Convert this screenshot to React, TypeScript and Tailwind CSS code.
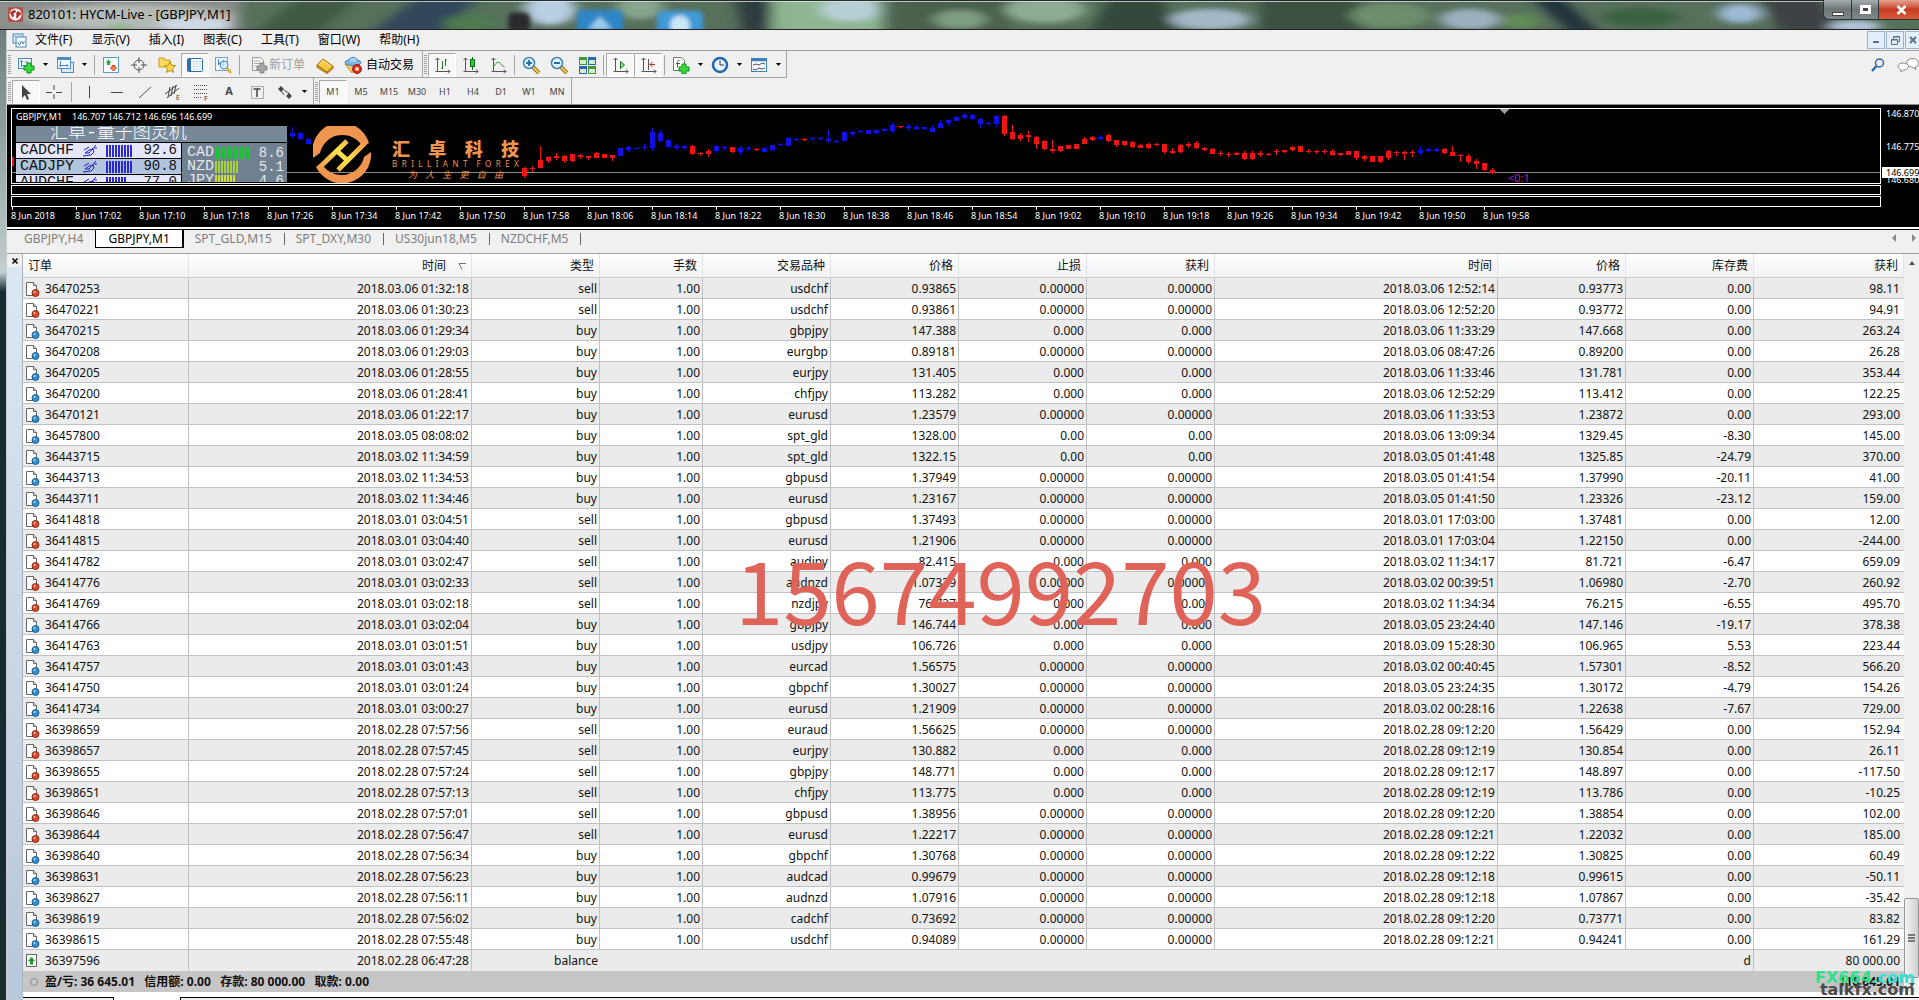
import type { ReactNode } from "react";
import clsx from "clsx";

type Candle = [number, number, number, number, number];

// [up, wick top, body top, body bottom, wick bottom]
const candles: Candle[] = [
    [0, 67, 68, 76, 78], [0, 66, 68, 69, 72], [0, 46, 60, 68, 68], [0, 56, 57, 61, 63], [0, 53, 56, 58, 60], [0, 55, 56, 61, 63],
    [0, 54, 54, 61, 62], [0, 54, 55, 57, 59], [0, 56, 56, 58, 60], [0, 52, 53, 58, 58], [0, 54, 54, 58, 58], [0, 55, 55, 58, 61],
    [1, 48, 48, 56, 56], [1, 46, 47, 50, 52], [1, 48, 48, 49, 49], [1, 44, 47, 48, 50], [1, 28, 32, 48, 51], [1, 30, 33, 41, 42],
    [1, 39, 40, 47, 48], [1, 44, 46, 48, 50], [1, 45, 46, 48, 50], [0, 45, 46, 54, 55], [0, 52, 53, 54, 56], [0, 49, 51, 54, 57],
    [1, 45, 46, 51, 53], [1, 46, 47, 48, 51], [0, 47, 47, 52, 53], [1, 46, 48, 52, 55], [1, 46, 48, 49, 51], [0, 48, 49, 50, 51],
    [1, 47, 48, 52, 52], [1, 45, 45, 50, 51], [1, 43, 44, 45, 46], [1, 37, 38, 46, 46], [1, 38, 39, 40, 41], [0, 38, 39, 40, 41],
    [1, 37, 38, 39, 40], [1, 37, 38, 39, 40], [1, 30, 39, 41, 43], [1, 40, 41, 42, 43], [1, 31, 32, 41, 41], [1, 31, 32, 34, 37],
    [1, 30, 31, 32, 33], [1, 30, 30, 34, 34], [1, 30, 30, 33, 34], [1, 28, 29, 31, 31], [1, 23, 25, 31, 33], [0, 26, 26, 27, 28],
    [1, 24, 26, 28, 30], [1, 25, 27, 29, 30], [1, 27, 27, 29, 30], [1, 25, 28, 32, 32], [1, 20, 23, 28, 28], [1, 19, 20, 23, 26],
    [1, 16, 17, 21, 21], [1, 13, 15, 18, 19], [1, 14, 15, 19, 20], [1, 18, 19, 24, 28], [1, 22, 23, 24, 25], [1, 15, 16, 24, 27],
    [0, 15, 16, 34, 36], [0, 25, 32, 39, 40], [0, 33, 35, 39, 41], [0, 31, 35, 37, 42], [0, 36, 37, 44, 49], [0, 40, 41, 49, 50],
    [0, 40, 49, 51, 53], [0, 46, 46, 51, 52], [0, 45, 45, 49, 49], [0, 44, 44, 49, 49], [0, 37, 39, 44, 44], [0, 36, 37, 40, 41],
    [1, 35, 37, 39, 40], [0, 34, 35, 41, 42], [0, 40, 40, 45, 47], [0, 41, 41, 45, 46], [0, 41, 42, 47, 48], [0, 44, 45, 48, 48],
    [0, 43, 44, 48, 49], [0, 43, 44, 45, 46], [0, 44, 44, 52, 54], [0, 48, 51, 53, 54], [0, 44, 45, 52, 53], [0, 42, 44, 46, 48],
    [0, 41, 43, 48, 49], [0, 47, 48, 50, 51], [0, 48, 49, 54, 54], [0, 51, 53, 54, 56], [0, 52, 54, 55, 57], [0, 52, 53, 55, 55],
    [0, 51, 53, 59, 60], [0, 51, 53, 59, 60], [0, 51, 53, 55, 57], [0, 53, 54, 55, 56], [0, 49, 51, 52, 55], [0, 50, 50, 52, 53],
    [0, 46, 47, 50, 51], [0, 46, 46, 52, 52], [0, 49, 51, 52, 53], [0, 50, 51, 52, 54], [0, 49, 51, 52, 54], [0, 49, 51, 55, 56],
    [0, 53, 53, 55, 56], [0, 51, 51, 55, 55], [0, 51, 51, 58, 60], [0, 55, 56, 59, 61], [0, 56, 56, 62, 62], [0, 56, 56, 62, 63],
    [0, 50, 51, 58, 60], [0, 51, 52, 53, 56], [0, 51, 52, 54, 60], [0, 50, 52, 53, 57], [1, 46, 50, 53, 55], [1, 48, 49, 51, 52],
    [1, 48, 49, 51, 52], [0, 48, 49, 53, 54], [0, 46, 52, 56, 56], [0, 54, 55, 56, 62], [0, 54, 56, 62, 64], [0, 59, 61, 64, 69],
    [0, 63, 63, 70, 71], [0, 68, 70, 73, 74],
];

const times = [
    "8 Jun 2018", "8 Jun 17:02", "8 Jun 17:10", "8 Jun 17:18", "8 Jun 17:26", "8 Jun 17:34", "8 Jun 17:42", "8 Jun 17:50",
    "8 Jun 17:58", "8 Jun 18:06", "8 Jun 18:14", "8 Jun 18:22", "8 Jun 18:30", "8 Jun 18:38", "8 Jun 18:46", "8 Jun 18:54",
    "8 Jun 19:02", "8 Jun 19:10", "8 Jun 19:18", "8 Jun 19:26", "8 Jun 19:34", "8 Jun 19:42", "8 Jun 19:50", "8 Jun 19:58",
];

// order | open time | type | symbol | price | s/l | t/p | close time | price | swap | profit
const orders = `36470253|2018.03.06 01:32:18|sell|usdchf|0.93865|0.00000|0.00000|2018.03.06 12:52:14|0.93773|0.00|98.11
36470221|2018.03.06 01:30:23|sell|usdchf|0.93861|0.00000|0.00000|2018.03.06 12:52:20|0.93772|0.00|94.91
36470215|2018.03.06 01:29:34|buy|gbpjpy|147.388|0.000|0.000|2018.03.06 11:33:29|147.668|0.00|263.24
36470208|2018.03.06 01:29:03|buy|eurgbp|0.89181|0.00000|0.00000|2018.03.06 08:47:26|0.89200|0.00|26.28
36470205|2018.03.06 01:28:55|buy|eurjpy|131.405|0.000|0.000|2018.03.06 11:33:46|131.781|0.00|353.44
36470200|2018.03.06 01:28:41|buy|chfjpy|113.282|0.000|0.000|2018.03.06 12:52:29|113.412|0.00|122.25
36470121|2018.03.06 01:22:17|buy|eurusd|1.23579|0.00000|0.00000|2018.03.06 11:33:53|1.23872|0.00|293.00
36457800|2018.03.05 08:08:02|buy|spt_gld|1328.00|0.00|0.00|2018.03.06 13:09:34|1329.45|-8.30|145.00
36443715|2018.03.02 11:34:59|buy|spt_gld|1322.15|0.00|0.00|2018.03.05 01:41:48|1325.85|-24.79|370.00
36443713|2018.03.02 11:34:53|buy|gbpusd|1.37949|0.00000|0.00000|2018.03.05 01:41:54|1.37990|-20.11|41.00
36443711|2018.03.02 11:34:46|buy|eurusd|1.23167|0.00000|0.00000|2018.03.05 01:41:50|1.23326|-23.12|159.00
36414818|2018.03.01 03:04:51|sell|gbpusd|1.37493|0.00000|0.00000|2018.03.01 17:03:00|1.37481|0.00|12.00
36414815|2018.03.01 03:04:40|sell|eurusd|1.21906|0.00000|0.00000|2018.03.01 17:03:04|1.22150|0.00|-244.00
36414782|2018.03.01 03:02:47|sell|audjpy|82.415|0.000|0.000|2018.03.02 11:34:17|81.721|-6.47|659.09
36414776|2018.03.01 03:02:33|sell|audnzd|1.07339|0.00000|0.00000|2018.03.02 00:39:51|1.06980|-2.70|260.92
36414769|2018.03.01 03:02:18|sell|nzdjpy|76.737|0.000|0.000|2018.03.02 11:34:34|76.215|-6.55|495.70
36414766|2018.03.01 03:02:04|buy|gbpjpy|146.744|0.000|0.000|2018.03.05 23:24:40|147.146|-19.17|378.38
36414763|2018.03.01 03:01:51|buy|usdjpy|106.726|0.000|0.000|2018.03.09 15:28:30|106.965|5.53|223.44
36414757|2018.03.01 03:01:43|buy|eurcad|1.56575|0.00000|0.00000|2018.03.02 00:40:45|1.57301|-8.52|566.20
36414750|2018.03.01 03:01:24|buy|gbpchf|1.30027|0.00000|0.00000|2018.03.05 23:24:35|1.30172|-4.79|154.26
36414734|2018.03.01 03:00:27|buy|eurusd|1.21909|0.00000|0.00000|2018.03.02 00:28:16|1.22638|-7.67|729.00
36398659|2018.02.28 07:57:56|sell|euraud|1.56625|0.00000|0.00000|2018.02.28 09:12:20|1.56429|0.00|152.94
36398657|2018.02.28 07:57:45|sell|eurjpy|130.882|0.000|0.000|2018.02.28 09:12:19|130.854|0.00|26.11
36398655|2018.02.28 07:57:24|sell|gbpjpy|148.771|0.000|0.000|2018.02.28 09:12:17|148.897|0.00|-117.50
36398651|2018.02.28 07:57:13|sell|chfjpy|113.775|0.000|0.000|2018.02.28 09:12:19|113.786|0.00|-10.25
36398646|2018.02.28 07:57:01|sell|gbpusd|1.38956|0.00000|0.00000|2018.02.28 09:12:20|1.38854|0.00|102.00
36398644|2018.02.28 07:56:47|sell|eurusd|1.22217|0.00000|0.00000|2018.02.28 09:12:21|1.22032|0.00|185.00
36398640|2018.02.28 07:56:34|buy|gbpchf|1.30768|0.00000|0.00000|2018.02.28 09:12:22|1.30825|0.00|60.49
36398631|2018.02.28 07:56:23|buy|audcad|0.99679|0.00000|0.00000|2018.02.28 09:12:18|0.99615|0.00|-50.11
36398627|2018.02.28 07:56:11|buy|audnzd|1.07916|0.00000|0.00000|2018.02.28 09:12:18|1.07867|0.00|-35.42
36398619|2018.02.28 07:56:02|buy|cadchf|0.73692|0.00000|0.00000|2018.02.28 09:12:20|0.73771|0.00|83.82
36398615|2018.02.28 07:55:48|buy|usdchf|0.94089|0.00000|0.00000|2018.02.28 09:12:21|0.94241|0.00|161.29`
    .split("\n")
    .map((line) => line.split("|"));

const headers = ["订单", "时间", "类型", "手数", "交易品种", "价格", "止损", "获利", "时间", "价格", "库存费", "获利"];

/* ---------- icons ---------- */

function Icon({ children, size = 18 }: { children: ReactNode; size?: number }) {
    return (
        <svg width={size} height={size} viewBox="0 0 18 18" fill="none" className="shrink-0">
            {children}
        </svg>
    );
}

const PLUS = "M9 7h4v3h3v4h-3v3h-4v-3H6v-4h3z";
const AXES = "M4.500 2v13.500H17M2.500 4l2-2 2 2M15 13.500l2 2-2 2M2.500 15.500h2";

function AppIcon() {
    return (
        <svg width="15" height="15" viewBox="0 0 15 15" className="shrink-0">
            <rect width="15" height="15" rx="2" fill="#b4514c" />
            <circle cx="7.500" cy="7.500" r="6" fill="#fff" />
            <path d="M2 5.500L5.500 3l2.500.5-.5 2-2 1L6 9l-1.500 1.500L3 8zM9.500 4l3 1.500.5 2-2 1.500-2 3-1-2 .5-2L8 6.500z" fill="#b4312c" />
        </svg>
    );
}

function ChartDocIcon() {
    return (
        <svg width="15" height="15" viewBox="0 0 15 15" fill="none" className="shrink-0">
            <rect x="1" y="1" width="10" height="9" fill="#e8f3fb" stroke="#4c86b8" />
            <rect x="4" y="4" width="10" height="10" fill="#f4faff" stroke="#4c86b8" />
            <path d="M5.500 9l2 3 2-4 1.500 3 1.500-3M3 4V2.500M6 3.500V2.500M8.500 3.500V2.500" stroke="#4c86b8" />
        </svg>
    );
}

function NewChartIcon() {
    return (
        <Icon>
            <rect x="1.500" y="2.500" width="13" height="10" fill="#eef7ff" stroke="#4b8cc4" />
            <path d="M4.500 4v7M3 5.500h3M4 9.500h8M8 6h3" stroke="#4b8cc4" />
            <path d={PLUS} transform="translate(1 0)" fill="#37dc3b" stroke="#0c8f18" />
        </Icon>
    );
}

function ProfilesIcon() {
    return (
        <Icon>
            <rect x="5.500" y="6.500" width="12" height="10" fill="#d7eaf9" stroke="#4b8cc4" />
            <rect x="1.500" y="1.500" width="13" height="11" fill="#f4faff" stroke="#4b8cc4" />
            <path d="M1.500 3h13" stroke="#4b8cc4" strokeWidth="2" />
            <path d="M4.500 5v6M3 9.500h9M10.500 8l1.500 1.500-1.500 1.500" stroke="#4b8cc4" />
        </Icon>
    );
}

function MarketWatchIcon() {
    return (
        <Icon>
            <rect x="1.500" y="1.500" width="15" height="15" fill="#f7fbff" stroke="#5c9ccf" />
            <path d="M6.500 3.500l3 3H8v2.500H5V6.500H3.500z" fill="#2fae3f" />
            <path d="M11.500 15l-3-3H10V9.500h3V12h1.500z" fill="#f08a60" stroke="#d0421a" />
        </Icon>
    );
}

function CrosshairIcon() {
    return (
        <Icon>
            <circle cx="9" cy="9" r="5" stroke="#555" />
            <path d="M9 1v6M9 11v6M1 9h6M11 9h6" stroke="#555" />
        </Icon>
    );
}

function FavoritesIcon() {
    return (
        <Icon>
            <path d="M1 2h5l1 2h5v7H1z" fill="#fbdc62" stroke="#c79b1c" />
            <path d="M12 5.500l1.700 3.700 3.800.4-2.900 2.700.9 4.100L12 14.300l-3.500 2.100.9-4.100-2.900-2.700 3.800-.4z" fill="#ffd84a" stroke="#b88b12" />
        </Icon>
    );
}

function NavigatorIcon() {
    return (
        <Icon>
            <rect x="1.500" y="2.500" width="15" height="13" rx="1" fill="#fff" stroke="#2d6faf" />
            <path d="M3.500 3v12" stroke="#2d6faf" strokeWidth="3" />
            <path d="M7 5.500h8M7 8h8M7 10.500h8M7 13h8" stroke="#a7cbe8" strokeDasharray="2 1" />
        </Icon>
    );
}

function TesterIcon() {
    return (
        <Icon>
            <rect x="1.500" y="1.500" width="12" height="13" fill="#eef7ff" stroke="#6ea5d2" />
            <path d="M4.500 3v6l2-3 3 4V4" stroke="#4b8cc4" />
            <circle cx="10" cy="9" r="4" fill="#cfe6f7" fillOpacity=".8" stroke="#4b8cc4" />
            <path d="M13 12l4 5" stroke="#dfae2a" strokeWidth="2.500" />
        </Icon>
    );
}

function NewOrderIcon() {
    return (
        <Icon>
            <path d="M2.500 1.500h8l3 3v10h-11z" fill="#f4f4f4" stroke="#9a9a9a" />
            <path d="M4 5h6M4 7.500h6M4 10h4" stroke="#b0b0b0" />
            <path d={PLUS} transform="translate(1 0)" fill="#a5a5a5" stroke="#858585" />
        </Icon>
    );
}

function GoldIcon() {
    return (
        <Icon>
            <path d="M1 9l6-6 10 7-6 6z" fill="#f4c542" stroke="#a87a14" />
            <path d="M1 9v2.500l10 6V16zM11 17.500l6-5V10l-6 6z" fill="#d39a1f" stroke="#a87a14" />
            <path d="M4 8.500l3-3.500 7 5" stroke="#ffeaa0" />
        </Icon>
    );
}

function AutoTradeIcon() {
    return (
        <Icon>
            <path d="M1 8l7 9 8-9z" fill="#f3cf5a" stroke="#b98e1d" />
            <ellipse cx="9" cy="6.500" rx="8" ry="3" fill="#7db9e4" stroke="#3e7fb5" />
            <path d="M4.500 5.500C4.500 0 13.500 0 13.500 5.500" fill="#a9d3f1" stroke="#3e7fb5" />
            <circle cx="13" cy="13" r="4.500" fill="#d8331f" stroke="#9c1d10" />
            <rect x="11.500" y="11.500" width="3" height="3" fill="#fff" />
        </Icon>
    );
}

function AxisIcon({ children }: { children: ReactNode }) {
    return (
        <Icon>
            <path d={AXES} stroke="#555" />
            {children}
        </Icon>
    );
}

function ZoomIcon({ plus }: { plus?: boolean }) {
    return (
        <Icon>
            <path d="M11 11l6 6" stroke="#8b6a1a" strokeWidth="4" />
            <path d="M11 11l6 6" stroke="#f2cd58" strokeWidth="2" />
            <circle cx="7" cy="7" r="5.500" fill="#e6f4fd" stroke="#3a84bf" strokeWidth="1.500" />
            <path d={plus ? "M4 7h6M7 4v6" : "M4 7h6"} stroke="#2a6fab" strokeWidth="2" />
        </Icon>
    );
}

function TileIcon() {
    return (
        <Icon>
            <rect x="1" y="1" width="8" height="8" fill="#3f9a2f" />
            <rect x="10" y="1" width="8" height="8" fill="#2d62b4" />
            <rect x="1" y="10" width="8" height="8" fill="#2d62b4" />
            <rect x="10" y="10" width="8" height="8" fill="#3f9a2f" />
            <path d="M2 4h6v4H2zM11 4h6v4h-6zM2 13h6v4H2zM11 13h6v4h-6z" fill="#d6ecd0" />
        </Icon>
    );
}

function IndicatorIcon() {
    return (
        <Icon>
            <path d="M1.500 1.500h8l3 3v10h-11z" fill="#fff" stroke="#777" />
            <path d="M7.500 4.500c-2-1-2 1-2 3v4M4 7.500h4" stroke="#555" />
            <path d={PLUS} transform="translate(1 1)" fill="#37dc3b" stroke="#0c8f18" />
        </Icon>
    );
}

function ClockIcon() {
    return (
        <Icon>
            <circle cx="9" cy="9" r="7" fill="#e9f5fd" stroke="#2368ad" strokeWidth="2.500" />
            <path d="M9 4.500V9h4" stroke="#333" />
        </Icon>
    );
}

function TemplateIcon() {
    return (
        <Icon>
            <rect x="1.500" y="2.500" width="15" height="13" fill="#f7fbff" stroke="#3f81bd" />
            <path d="M1.500 4h15" stroke="#3f81bd" strokeWidth="2.500" />
            <path d="M3 9l3-1 3 1 3-2 3 1M3 13l3 1 3-2 3 1 3-1" stroke="#555" />
        </Icon>
    );
}

function OrderIcon({ sell }: { sell: boolean }) {
    return (
        <svg width="15" height="16" viewBox="0 0 15 16" fill="none" className="shrink-0">
            <path d="M1.500 1.500h7l3 3v10h-10z" fill="#fff" stroke="#666" />
            <path d="M8.500 1.500v3h3" fill="#ddd" stroke="#666" />
            <circle cx="10.500" cy="12" r="3.500" fill={sell ? "#d8492a" : "#2f8fd0"} stroke={sell ? "#8f2812" : "#1b5f93"} />
            <circle cx="9.500" cy="11" r="1" fill="#fff" fillOpacity=".7" />
        </svg>
    );
}

function BalanceIcon() {
    return (
        <svg width="15" height="16" viewBox="0 0 15 16" className="shrink-0">
            <rect x="1.500" y="1.500" width="10" height="12" fill="#f5fff5" stroke="#666" />
            <path d="M6.500 4l3.500 4H8v3.500H5V8H3z" fill="#1f9a2c" />
        </svg>
    );
}

/* ---------- toolbar parts ---------- */

function Tool({ label, pressed, children }: { label: string; pressed?: boolean; children: ReactNode }) {
    return (
        <button
            aria-label={label}
            className={clsx(
                "flex h-6 w-7 shrink-0 items-center justify-center border text-[9px] text-[#444]",
                pressed ? "border-[#a8a8a8] border-r-white border-b-white bg-[#f8f8f8]" : "border-transparent",
            )}
        >
            {children}
        </button>
    );
}

function Caret() {
    return (
        <button aria-label="more" className="flex h-6 w-[11px] shrink-0 items-center justify-center">
            <svg width="7" height="4" viewBox="0 0 7 4"><path d="M1 0h5L3.500 3z" fill="#000" /></svg>
        </button>
    );
}

function Grip() {
    return (
        <svg width="3" height="20" className="mx-px shrink-0">
            {Array.from({ length: 10 }, (_, i) => <path key={i} d={`M0 ${i * 2 + 0.5}h3`} stroke="#a0a0a0" />)}
        </svg>
    );
}

function Sep({ wide }: { wide?: boolean }) {
    return <div className={clsx("h-5 w-px shrink-0 bg-[#a5a5a5]", wide ? "mx-[3px]" : "mx-[2px]")} />;
}

/* ---------- window sections ---------- */

function TitleBar() {
    return (
        <header className="relative flex h-[30px] items-start overflow-hidden border-b border-[#222] bg-[#56705c]">
            <svg className="absolute inset-0 h-full w-full" preserveAspectRatio="none" viewBox="0 0 1919 30">
                <defs>
                    <filter id="soft" x="-20%" y="-50%" width="140%" height="200%"><feGaussianBlur stdDeviation="7 3" /></filter>
                    <filter id="glow" x="-50%" y="-50%" width="200%" height="200%"><feGaussianBlur stdDeviation="2" /></filter>
                </defs>
                <g filter="url(#soft)">
                    <rect x="-20" width="260" height="34" fill="#8b908d" />
                    <ellipse cx="130" cy="18" rx="105" ry="13" fill="#b4bab6" />
                    <ellipse cx="195" cy="26" rx="36" ry="8" fill="#cfd9e6" />
                    <ellipse cx="120" cy="29" rx="10" ry="4" fill="#7bb874" />
                    <path d="M255 34L300-4h60l-40 38z" fill="#3f5a44" />
                    <path d="M370 34L420-4h60l-40 38z" fill="#33465a" />
                    <ellipse cx="470" cy="24" rx="26" ry="9" fill="#4d7a4f" />
                    <ellipse cx="550" cy="10" rx="26" ry="16" fill="#b9cfe4" />
                    <ellipse cx="640" cy="8" rx="24" ry="12" fill="#86a68e" />
                    <path d="M735-4h40l-8 38h-24z" fill="#2f3b40" />
                    <rect x="772" y="-4" width="110" height="38" fill="#8fb592" />
                    <ellipse cx="850" cy="10" rx="30" ry="12" fill="#b7d0d6" />
                    <rect x="890" y="-4" width="120" height="38" fill="#48604e" />
                    <ellipse cx="960" cy="20" rx="26" ry="10" fill="#7d9c81" />
                    <ellipse cx="1045" cy="10" rx="40" ry="14" fill="#8dab92" />
                    <path d="M1090 34l20-38h50l20 38z" fill="#33483a" />
                    <ellipse cx="1210" cy="20" rx="40" ry="11" fill="#a3b8c6" />
                    <rect x="1260" y="-4" width="100" height="38" fill="#3a5140" />
                    <ellipse cx="1390" cy="16" rx="40" ry="13" fill="#6d8f6c" />
                    <ellipse cx="1470" cy="20" rx="30" ry="11" fill="#9bb0bf" />
                    <path d="M1530-4h30l40 38h-30z" fill="#23333a" />
                    <ellipse cx="1520" cy="22" rx="18" ry="8" fill="#628c55" />
                    <ellipse cx="1640" cy="18" rx="40" ry="10" fill="#3e6242" />
                    <ellipse cx="1740" cy="14" rx="22" ry="10" fill="#9fbad6" />
                    <path d="M1760-4h60l20 38h-60z" fill="#3c4345" />
                    <ellipse cx="1855" cy="27" rx="26" ry="6" fill="#b3c6da" />
                </g>
                <g filter="url(#glow)">
                    <rect x="508" y="13" width="22" height="20" rx="6" fill="#2a2c2e" />
                    <rect x="577" y="10" width="46" height="26" rx="6" fill="#2d86c6" />
                    <path d="M588 30l12-13 12 13z" fill="#9fd0ee" />
                    <rect x="657" y="11" width="46" height="26" rx="6" fill="#3f9ad8" />
                    <circle cx="680" cy="26" r="10" fill="#c9e6f8" />
                </g>
                <path d="M0 1.500h1919" stroke="#e4ecec" strokeOpacity=".8" />
                <path d="M0 .5h1919" stroke="#202628" />
            </svg>
            <div className="relative flex h-[29px] items-center gap-[5px] pl-2 text-[13px] text-black">
                <AppIcon />
                <h1>820101: HYCM-Live - [GBPJPY,M1]</h1>
            </div>
            <div className="relative ml-auto flex h-5 overflow-hidden rounded-bl-md border-b border-l border-[#2c3336]">
                <button aria-label="Minimize" className="flex w-7 items-center justify-center border-r border-[#30383b] bg-linear-to-b from-[#a7adaf] via-[#6d7577] to-[#7f898c]">
                    <span className="mt-2 h-1 w-3 border border-[#444] bg-white" />
                </button>
                <button aria-label="Maximize" className="flex w-[27px] items-center justify-center border-r border-[#30383b] bg-linear-to-b from-[#a7adaf] via-[#6d7577] to-[#7f898c]">
                    <span className="h-[9px] w-[11px] border-[3px] border-white bg-[#444]" />
                </button>
                <button aria-label="Close" className="flex w-10 items-center justify-center bg-linear-to-b from-[#e5a292] via-[#c63a20] to-[#d9593a] pl-1">
                    <svg width="11" height="10" viewBox="0 0 11 10"><path d="M1.500 1l8 8M9.500 1l-8 8" stroke="#fff" strokeWidth="2.500" /></svg>
                </button>
            </div>
        </header>
    );
}

function MenuBar() {
    const items = ["文件(F)", "显示(V)", "插入(I)", "图表(C)", "工具(T)", "窗口(W)", "帮助(H)"];
    return (
        <nav className="flex h-[21px] items-center border-b border-[#a0a0a0] pl-[5px] text-[12px]">
            <ChartDocIcon />
            <div className="ml-2 flex gap-[19px]">
                {items.map((item) => <button key={item} className="leading-5">{item}</button>)}
            </div>
            <div className="ml-auto flex gap-px text-[#5d7285]">
                <button aria-label="Minimize chart" className="flex h-[18px] w-[18px] items-center justify-center border border-[#9fb4c8] bg-[#e3effa]">
                    <span className="mt-1 h-[2px] w-[6px] bg-[#5d7285]" />
                </button>
                <button aria-label="Restore chart" className="flex h-[18px] w-[18px] items-center justify-center border border-[#9fb4c8] bg-[#e3effa]">
                    <svg width="9" height="9" viewBox="0 0 9 9" fill="none" stroke="#5d7285"><path d="M2.500 3V.5h6v5H7M2 1h7M.5 3.500h6v5h-6zM0 4h7" /></svg>
                </button>
                <button aria-label="Close chart" className="flex h-[18px] w-[14px] items-center justify-center border border-r-0 border-[#9fb4c8] bg-[#e3effa]">
                    <svg width="8" height="8" viewBox="0 0 8 8"><path d="M1 1l6 6M7 1L1 7" stroke="#5d7285" strokeWidth="2" /></svg>
                </button>
            </div>
        </nav>
    );
}

function MainToolbar() {
    return (
        <div className="flex h-[27px] items-center">
            <div className="flex h-full items-center border-r border-b border-[#a5a5a5] pt-px pr-2">
                <Grip />
                <Tool label="New chart"><NewChartIcon /></Tool>
                <Caret />
                <Tool label="Profiles"><ProfilesIcon /></Tool>
                <Caret />
                <div className="w-[2px]" />
                <Sep />
                <Tool label="Market watch"><MarketWatchIcon /></Tool>
                <Tool label="Data window"><CrosshairIcon /></Tool>
                <Tool label="Navigator"><FavoritesIcon /></Tool>
                <Tool label="Terminal" pressed><NavigatorIcon /></Tool>
                <Tool label="Strategy tester"><TesterIcon /></Tool>
                <Sep />
                <button className="flex items-center gap-px pl-2 text-[12px] text-[#a0a0a0]"><NewOrderIcon />新订单</button>
                <div className="w-[6px]" />
                <Tool label="MetaEditor"><GoldIcon /></Tool>
                <button className="flex items-center gap-1 pl-[5px] text-[12px]"><AutoTradeIcon />自动交易</button>
            </div>
            <div className="flex h-full items-center border-r border-b border-[#a5a5a5] pt-px pr-[2px]">
                <Grip />
                <Tool label="Bar chart" pressed><AxisIcon><path d="M9.500 5v8M9.500 12H8M12.500 3v7M12.500 4H14" stroke="#1c7a22" /></AxisIcon></Tool>
                <Tool label="Candlesticks"><AxisIcon><path d="M11.500 1v13" stroke="#136b1b" /><rect x="9.500" y="3.500" width="4" height="7" fill="#2fc93c" stroke="#136b1b" /></AxisIcon></Tool>
                <Tool label="Line chart"><AxisIcon><path d="M4.500 11c3-6 6-6 8-2l3 2" stroke="#2d9a36" /></AxisIcon></Tool>
                <Sep />
                <Tool label="Zoom in"><ZoomIcon plus /></Tool>
                <Tool label="Zoom out"><ZoomIcon /></Tool>
                <Tool label="Tile windows"><TileIcon /></Tool>
                <Sep />
                <Tool label="Auto scroll" pressed><AxisIcon><path d="M9.500 5.500v7l4-3.500z" fill="#8fd894" stroke="#1c7a22" /></AxisIcon></Tool>
                <Tool label="Chart shift" pressed><AxisIcon><path d="M9.500 3v11" stroke="#555" /><path d="M16 8.500h-5M13.500 6L11 8.500l2.500 2.500" stroke="#a8322a" /></AxisIcon></Tool>
                <Sep />
                <Tool label="Indicators"><IndicatorIcon /></Tool>
                <Caret />
                <Tool label="Periods"><ClockIcon /></Tool>
                <Caret />
                <Tool label="Templates"><TemplateIcon /></Tool>
                <Caret />
            </div>
            <div className="ml-auto flex items-center gap-3">
                <button aria-label="Search">
                    <svg width="14" height="14" viewBox="0 0 14 14" fill="none"><circle cx="8.500" cy="5" r="4" stroke="#3461ad" strokeWidth="1.500" /><path d="M5.500 8l-4.500 5" stroke="#3461ad" strokeWidth="2.500" /></svg>
                </button>
                <button aria-label="Community">
                    <svg width="22" height="16" viewBox="0 0 22 16" fill="#fff" stroke="#8a8a8a">
                        <path d="M15 1.500c8 0 8 8 3 8.500l1 2.500-4-2.500c-7 0-7-8.500 0-8.500z" />
                        <path d="M6.500 6c6.500 0 6.500 7 0 7L4 15v-2.500C-.5 11 0 6 6.500 6z" />
                    </svg>
                </button>
            </div>
        </div>
    );
}

function DrawToolbar() {
    return (
        <div className="flex h-[27px] items-center border-b border-[#8a8a8a]">
            <div className="flex h-full items-center border-r border-[#a5a5a5] pt-px pr-[3px]">
                <Grip />
                <Tool label="Cursor" pressed><Icon><path d="M5 2v13l3-3 2 5 2-1-2-5h4z" fill="#444" /></Icon></Tool>
                <Tool label="Crosshair"><Icon><path d="M9 2v5M9 11v5M1 9.500h6M11 9.500h6" stroke="#444" /></Icon></Tool>
                <Sep wide />
                <Tool label="Vertical line"><Icon><path d="M9.500 3v12" stroke="#444" /></Icon></Tool>
                <Tool label="Horizontal line"><Icon><path d="M3 9.500h12" stroke="#444" /></Icon></Tool>
                <Tool label="Trendline"><Icon><path d="M3 15L15 4" stroke="#555" /></Icon></Tool>
                <Tool label="Equidistant channel">
                    <Icon>
                        <path d="M1 11L13 2M3 15L15 5M6 4L4 14M9 3L7 13M12 2l-2 9" stroke="#444" />
                        <text x="12" y="17" fontSize="7" fill="#333">E</text>
                    </Icon>
                </Tool>
                <Tool label="Fibonacci">
                    <Icon>
                        <path d="M2 2.500h14M2 6.500h14M2 10.500h14M2 14.500h8" stroke="#444" strokeDasharray="1 1" />
                        <text x="12" y="18" fontSize="7" fill="#333">F</text>
                    </Icon>
                </Tool>
                <Tool label="Text"><span className="text-[11px] font-bold">A</span></Tool>
                <Tool label="Text label">
                    <Icon>
                        <rect x="3.500" y="3.500" width="12" height="12" stroke="#666" strokeDasharray="1 1" />
                        <path d="M5.500 6h7M9 6v8" stroke="#444" strokeWidth="1.500" />
                    </Icon>
                </Tool>
                <Tool label="Arrows">
                    <Icon>
                        <path d="M5 3l3 3-3 3-3-3zM13 10l3 3-3 3-3-3z" fill="#444" />
                        <path d="M5 8l3 4M8 7l6 4" stroke="#444" />
                    </Icon>
                </Tool>
                <Caret />
            </div>
            <div className="flex h-full items-center border-r border-[#a5a5a5] pt-px">
                <Grip />
                {["M1", "M5", "M15", "M30", "H1", "H4", "D1", "W1", "MN"].map((tf) => (
                    <Tool key={tf} label={tf} pressed={tf === "M1"}>{tf}</Tool>
                ))}
            </div>
        </div>
    );
}

function Bars({ n, color }: { n: number; color: string }) {
    return (
        <span className="flex gap-px">
            {Array.from({ length: n }, (_, i) => <i key={i} className={clsx("h-3 w-[2px]", color)} />)}
        </span>
    );
}

function StrengthPanel() {
    const pairs = [
        { name: "CADCHF", n: 9, value: "92.6", bg: "bg-[#e6e6fa]" },
        { name: "CADJPY", n: 9, value: "90.8", bg: "bg-[#b0c4de]" },
        { name: "AUDCHF", n: 7, value: "77.0", bg: "bg-[#e6e6fa]" },
    ];
    const currencies = [
        { name: "CAD", n: 12, value: "8.6", color: "bg-[#19c832]" },
        { name: "NZD", n: 8, value: "5.1", color: "bg-[#a4d43a]" },
        { name: "JPY", n: 7, value: "4.6", color: "bg-[#d2e02c]" },
    ];
    return (
        <div className="flex h-14 w-[271px] flex-col overflow-hidden font-['Liberation_Mono','Noto_Sans_CJK_SC',monospace] text-[15px]">
            <div className="h-4 shrink-0 bg-[#778899] pl-[34px] text-[18px] leading-[14px] font-light text-white">汇卓-量子图灵机</div>
            <div className="mt-px flex">
                <div className="flex w-[165px] flex-col gap-px">
                    {pairs.map((p) => (
                        <div key={p.name} className={clsx("flex h-[15px] items-center pr-1 pl-1 leading-[17px] text-[#111]", p.bg)}>
                            {p.name}
                            <svg width="16" height="12" viewBox="0 0 16 12" className="mx-2 shrink-0" fill="none" stroke="#2020b8">
                                <path d="M1 11l8-1 3-3-1-3-4 1-4 3 5 0M14 0L7 8M12 3l3 0M2 5l5-3" />
                            </svg>
                            <Bars n={p.n} color="bg-[#2a2ad0]" />
                            <span className="ml-auto text-[14px]">{p.value}</span>
                        </div>
                    ))}
                </div>
                <div className="ml-px flex-1 bg-[#708090] pt-[3px] text-[#e4e8ee]">
                    {currencies.map((c) => (
                        <div key={c.name} className="flex h-[14px] items-center pr-[3px] pl-[5px] leading-[14px]">
                            {c.name}
                            <span className="ml-px"><Bars n={c.n} color={c.color} /></span>
                            <span className="ml-auto text-[14px]">{c.value}</span>
                        </div>
                    ))}
                </div>
            </div>
        </div>
    );
}

function Brand() {
    return (
        <div className="ml-[26px] flex items-start text-[#ee9550]">
            <svg width="58" height="58" viewBox="0 0 58 58" fill="none" className="shrink-0">
                <defs>
                    <linearGradient id="gold" gradientUnits="userSpaceOnUse" x1="48" y1="10" x2="10" y2="48">
                        <stop stopColor="#f0954f" />
                        <stop offset=".5" stopColor="#ffe24a" />
                        <stop offset="1" stopColor="#f0954f" />
                    </linearGradient>
                </defs>
                <path d="M0 32A29 29 0 0 1 56 17L50 21 46 16A23 23 0 0 0 7 27z" fill="#f0954f" />
                <path d="M58 26A29 29 0 0 1 3 41L8 37 12 42A23 23 0 0 0 51 31z" fill="#f0954f" />
                <path d="M52 17L25 44M6 42L34 15M24 25l10 9" stroke="url(#gold)" strokeWidth="5" />
            </svg>
            <div className="ml-[21px] flex w-[127px] flex-col pt-3">
                <div className="flex justify-between text-[18px] leading-[22px] font-black">
                    {[..."汇卓科技"].map((c) => <span key={c}>{c}</span>)}
                </div>
                <div className="flex justify-between text-[8px] leading-2">
                    {[..."BRILLIANT FOREX"].map((c, i) => <span key={i}>{c}</span>)}
                </div>
                <div className="flex justify-between px-4 pt-px text-[9px] leading-[11px] italic">
                    {[..."为人生更自由"].map((c) => <span key={c}>{c}</span>)}
                </div>
            </div>
        </div>
    );
}

function Chart() {
    return (
        <section className="flex h-[125px] border-b border-black bg-black pl-[4px] text-[9px] text-white shadow-[inset_0_-2px_0_#fff]">
            <div className="flex min-w-0 flex-1 flex-col gap-px pt-[3px]">
                <div className="relative h-[76px] overflow-hidden border border-white">
                    <svg className="absolute inset-0 h-full w-full" shapeRendering="crispEdges">
                        <path d="M0 63.500h10000" stroke="#8a8a8a" />
                        <path d="M1488 0h9l-4.500 5z" fill="#9a9a9a" />
                        <g transform="translate(0 -9)">
                            <path d="M280.500 27v11M288.500 32v8M296.500 38v6" stroke="#1212e6" />
                            <path d="M278 33h5v3h-5zM286 33h5v6h-5zM294 39h5v5h-5z" fill="#1212e6" />
                            <path d="M0 57h2v9H0z" fill="#f01414" />
                            {candles.map(([up, wt, bt, bb, wb], i) => (
                                <g key={i} fill={up ? "#1212e6" : "#f01414"}>
                                    <rect x={512 + i * 8} y={wt} width="1" height={wb - wt} />
                                    <rect x={510 + i * 8} y={bt} width="5" height={bb - bt} />
                                </g>
                            ))}
                        </g>
                    </svg>
                    <p className="relative flex gap-[10px] pl-1 leading-4">
                        <span>GBPJPY,M1</span>
                        <span>146.707 146.712 146.696 146.699</span>
                    </p>
                    <div className="relative flex pt-px pl-1">
                        <StrengthPanel />
                        <Brand />
                    </div>
                    <span className="absolute bottom-[-3px] left-[1496px] text-[11px] leading-4 text-[#b020b0]">&lt;0:1</span>
                </div>
                <div className="h-[10px] border border-white" />
                <div className="h-[11px] border border-white" />
                <div className="-mt-px flex overflow-hidden">
                    {times.map((t) => (
                        <div key={t} className="w-16 shrink-0 leading-3 whitespace-nowrap">
                            <div className="ml-px h-[3px] w-px bg-white" />
                            <span>{t}</span>
                        </div>
                    ))}
                </div>
            </div>
            <div className="flex w-[38px] shrink-0 flex-col overflow-hidden leading-[11px]">
                <span className="mt-[3px] pl-[5px]">146.870</span>
                <span className="mt-[22px] pl-[5px]">146.775</span>
                <span className="relative z-10 mt-[15px] ml-px bg-white pl-1 text-black">146.699</span>
                <span className="-mt-1 pl-[5px]">146.680</span>
            </div>
        </section>
    );
}

function ChartTabs() {
    const tabs = ["GBPJPY,H4", "GBPJPY,M1", "SPT_GLD,M15", "SPT_DXY,M30", "US30jun18,M5", "NZDCHF,M5"];
    return (
        <div className="flex h-6 items-start border-b border-[#a0a0a0] pl-[6px] text-[12px] text-[#7d7d7d]">
            {tabs.map((t) => (
                <button
                    key={t}
                    className={clsx(
                        "h-[18px] leading-[18px]",
                        t === "GBPJPY,M1"
                            ? "border-r-2 border-b border-l border-black bg-white px-3 text-black"
                            : "flex items-center pl-[11px]",
                    )}
                >
                    {t}
                    {t !== "GBPJPY,M1" && <span className={clsx("h-3 w-px", t === "GBPJPY,H4" ? "ml-[11px]" : "ml-3 bg-[#666]")} />}
                </button>
            ))}
            <div className="ml-auto flex items-center gap-4 pt-1 pr-[3px]">
                <button aria-label="Scroll left"><svg width="4" height="8" viewBox="0 0 4 8"><path d="M4 0v8L0 4z" fill="#888" /></svg></button>
                <button aria-label="Scroll right"><svg width="4" height="8" viewBox="0 0 4 8"><path d="M0 0v8l4-4z" fill="#888" /></svg></button>
            </div>
        </div>
    );
}

function OrdersTable() {
    return (
        <table className="w-full table-fixed border-separate border-spacing-0 text-right text-[12px] leading-5 text-[#111]">
            <colgroup>
                <col className="w-[166px]" />
                <col className="w-[283px]" />
                <col className="w-[128px]" />
                <col className="w-[103px]" />
                <col className="w-[128px]" />
                <col className="w-[128px]" />
                <col className="w-[128px]" />
                <col className="w-[128px]" />
                <col className="w-[283px]" />
                <col className="w-[128px]" />
                <col className="w-[128px]" />
                <col />
            </colgroup>
            <thead>
                <tr className="h-6 bg-linear-to-b from-white to-[#eff1f3]">
                    {headers.map((h, i) => (
                        <th
                            key={i}
                            scope="col"
                            className={clsx(
                                "border-r border-b border-r-[#e2e4e6] border-b-[#c8cacc] p-0 font-normal",
                                i === 0 ? "pl-[5px] text-left" : "pr-[5px]",
                            )}
                        >
                            {h}
                            {i === 1 && (
                                <svg width="8" height="7" viewBox="0 0 8 7" fill="none" className="ml-3 inline"><path d="M8 .5H1l3 6" stroke="#777" /></svg>
                            )}
                        </th>
                    ))}
                </tr>
            </thead>
            <tbody>
                {orders.map(([id, open, type, symbol, ...rest]) => (
                    <tr key={id} className="h-[21px] leading-[18px] odd:bg-[#ebebeb] even:bg-white [&>td]:border-r [&>td]:border-b [&>td]:border-[#bfc2c5] [&>td]:p-0 [&>td]:pt-[2px] [&>td]:pr-[2px] [&>td:last-child]:border-r-0 [&>td:last-child]:pr-1">
                        <td>
                            <div className="flex items-center gap-[5px] pl-[2px]"><OrderIcon sell={type === "sell"} />{id}</div>
                        </td>
                        <td>{open}</td>
                        <td>{type}</td>
                        <td>1.00</td>
                        <td>{symbol}</td>
                        {rest.map((v, i) => <td key={i}>{v}</td>)}
                    </tr>
                ))}
                <tr className="h-[21px] bg-[#ebebeb] [&>td]:border-r [&>td]:border-[#bfc2c5] [&>td]:p-0 [&>td]:pr-[2px]">
                    <td>
                        <div className="flex items-center gap-[5px] pl-[2px]"><BalanceIcon />36397596</div>
                    </td>
                    <td>2018.02.28 06:47:28</td>
                    <td className="border-r-0!">balance</td>
                    <td colSpan={8}>d</td>
                    <td className="border-r-0! pr-1!">80 000.00</td>
                </tr>
            </tbody>
            <tfoot>
                <tr className="h-[21px] bg-[#c6c6c6] font-bold">
                    <td colSpan={11} className="p-0">
                        <div className="flex items-center pl-[7px]">
                            <span className="mr-[7px] h-2 w-2 rounded-full border border-[#888]" />
                            <span className="whitespace-pre">盈/亏: 36 645.01   信用额: 0.00   存款: 80 000.00   取款: 0.00</span>
                        </div>
                    </td>
                    <td className="p-0 pr-1">116 645.01</td>
                </tr>
            </tfoot>
        </table>
    );
}

function Scrollbar() {
    return (
        <div className="flex w-[15px] shrink-0 flex-col bg-[#f0f0f0]">
            <button aria-label="Scroll up" className="flex h-[17px] items-center justify-center">
                <svg width="6" height="4" viewBox="0 0 6 4"><path d="M0 4h6L3 0z" fill="#555" /></svg>
            </button>
            <div className="flex-1" />
            <div className="flex h-20 flex-col items-center justify-center gap-px rounded-xs border border-[#979797] bg-linear-to-r from-[#f5f5f5] to-[#cfcfd1]">
                <i className="h-[2px] w-[7px] bg-[#777]" />
                <i className="h-[2px] w-[7px] bg-[#777]" />
                <i className="h-[2px] w-[7px] bg-[#777]" />
            </div>
            <button aria-label="Scroll down" className="flex h-[14px] items-center justify-center">
                <svg width="6" height="4" viewBox="0 0 6 4"><path d="M0 0h6L3 4z" fill="#555" /></svg>
            </button>
        </div>
    );
}

function Terminal() {
    return (
        <section className="relative flex">
            <div className="flex w-4 shrink-0 flex-col border-r border-[#a8b2bd] bg-linear-to-b from-[#dce7f4] to-[#b9c8da]">
                <button aria-label="Close terminal" className="flex h-[13px] items-center justify-center bg-[#f0f0f0]">
                    <svg width="6" height="6" viewBox="0 0 6 6"><path d="M.5 .5l5 5M5.500 .5l-5 5" stroke="#000" strokeWidth="1.500" /></svg>
                </button>
            </div>
            <div className="min-w-0 flex-1"><OrdersTable /></div>
            <Scrollbar />
            <p className="pointer-events-none absolute top-[269px] left-[728px] font-['Noto_Sans_CJK_SC',sans-serif] text-[87px] leading-[128px] text-[#e0635a]">15674992703</p>
            <div className="pointer-events-none absolute right-[4px] bottom-[-6px] text-right font-['DejaVu_Sans',sans-serif] text-[16px] font-bold">
                <p className="leading-4 text-[#2fe08a]">FX664<span className="text-[#35e0d0]">.com</span></p>
                <p className="-mt-1 leading-4 text-[#4a4a4a]">talkfx.com</p>
            </div>
        </section>
    );
}

export default function App() {
    return (
        <div className="flex min-h-screen flex-col overflow-hidden bg-[#f0f0f0] font-['Noto_Sans','Noto_Sans_CJK_SC',sans-serif] text-black">
            <TitleBar />
            <div className="flex flex-1">
                <div className="w-[7px] shrink-0 border-r border-[#c4ced2] bg-linear-to-b from-[#6e7f7c] from-0% via-[#c3cfcf] via-25% to-[#182c30] to-27%" />
                <main className="flex min-w-0 flex-1 flex-col">
                    <MenuBar />
                    <MainToolbar />
                    <DrawToolbar />
                    <Chart />
                    <ChartTabs />
                    <Terminal />
                    <div className="flex flex-1 items-end bg-white">
                        <div className="h-2 w-4 bg-[#b9c8da]" />
                        <div className="h-[3px] w-[91px] border-t border-r border-black bg-[#f0f0f0]" />
                        <div className="w-[66px]" />
                        <div className="h-[3px] flex-1 border-t border-l border-black bg-[#f0f0f0]" />
                    </div>
                </main>
            </div>
        </div>
    );
}
